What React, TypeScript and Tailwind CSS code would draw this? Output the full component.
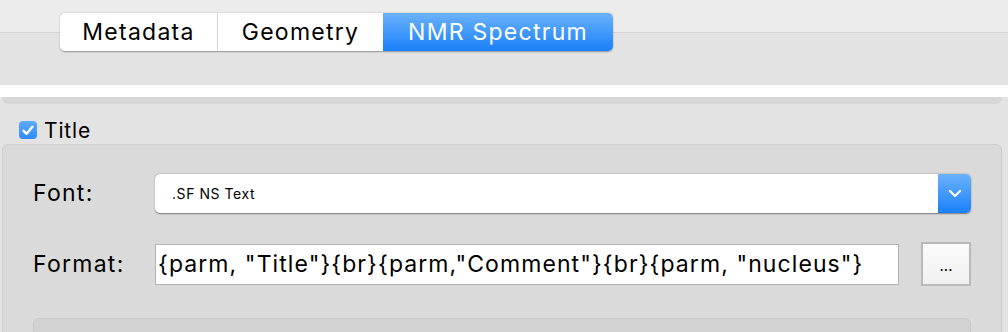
import React from "react";

export default function App() {
  const font = { fontFamily: "Inter, 'Liberation Sans', sans-serif" };
  return (
    <div
      className="w-[1008px] h-[332px] overflow-hidden bg-[#e3e3e3] text-black"
      style={font}
    >
      {/* header */}
      <div className="h-[33px] bg-[#ececec] border-b border-[#d2d2d2]" />
      <div className="-mt-[20px] ml-[60px] flex h-[38px] w-[553px] rounded-[5px] shadow-[0_0.5px_1.5px_rgba(0,0,0,0.35)] overflow-hidden text-[23px] leading-none tracking-[0.055em]">
        <div className="w-[158px] flex items-center justify-center bg-white border-r border-[#d8d8d8]">
          Metadata
        </div>
        <div className="w-[165px] flex items-center justify-center bg-white">
          Geometry
        </div>
        <div className="flex-1 flex items-center justify-center text-white bg-[linear-gradient(#6bb2fb,#1a80fb)]">
          NMR Spectrum
        </div>
      </div>

      {/* white bar / scroll panel */}
      <div className="mt-[34px] h-[12px] bg-white" />
      <div className="ml-[2px] mr-[6px] h-[7px] rounded-b-[6px] bg-[#d7d7d7]" />

      {/* checkbox row */}
      <div className="mt-[16px] ml-[19px] flex items-center gap-[7px] h-[20px]">
        <div className="w-[18px] h-[18px] rounded-[4px] bg-[linear-gradient(#5eabfc,#2f8bfb)] flex items-center justify-center">
          <svg width="12" height="11" viewBox="0 0 12 11">
            <path
              d="M1.6 5.8 L4.6 8.8 L10.4 1.8"
              fill="none"
              stroke="white"
              strokeWidth="2.4"
              strokeLinecap="round"
              strokeLinejoin="round"
            />
          </svg>
        </div>
        <span className="text-[21px] leading-none tracking-[0.04em]">Title</span>
      </div>

      {/* group box */}
      <div className="mt-[4px] ml-[2px] mr-[6px] h-[200px] rounded-[6px] bg-[#dadada] border border-[#cdcdcd] pt-[29px] pl-[30px] pr-[30px]">
        <div className="flex items-center h-[39px]">
          <span className="w-[122px] text-[23px] leading-none tracking-[0.055em]">Font:</span>
          <div className="flex-1 flex h-[39px] rounded-[5px] bg-white shadow-[0_0.5px_1.5px_rgba(0,0,0,0.45)] overflow-hidden">
            <div className="flex-1 flex items-center pl-[17px] text-[14px] tracking-[0.04em]">
              .SF NS Text
            </div>
            <div className="w-[33px] flex items-center justify-center bg-[linear-gradient(#6bb2fb,#1a80fb)]">
              <svg width="14" height="9" viewBox="0 0 14 9">
                <path
                  d="M2 2 L7 7 L12 2"
                  fill="none"
                  stroke="white"
                  strokeWidth="2.2"
                  strokeLinecap="round"
                  strokeLinejoin="round"
                />
              </svg>
            </div>
          </div>
        </div>

        <div className="mt-[29px] flex items-center h-[44px]">
          <span className="w-[122px] text-[23px] leading-none tracking-[0.055em]">Format:</span>
          <div className="w-[744px] h-[41px] bg-white border border-[#b3b3b3] flex items-center pl-[2px] text-[23px] leading-none tracking-[0.047em] whitespace-nowrap overflow-hidden">
            {'{parm, "Title"}{br}{parm,"Comment"}{br}{parm, "nucleus"}'}
          </div>
          <div className="ml-[22px] w-[50px] h-[44px] border-2 border-[#b9b9b9] bg-[linear-gradient(#fbfbfb,#f0f0f0)] flex items-center justify-center text-[15px] leading-none pt-[2px]">
            ...
          </div>
        </div>

        <div className="mt-[32px] h-[40px] rounded-[6px] bg-[#d2d2d2] border border-[#c8c8c8]" />
      </div>
    </div>
  );
}
